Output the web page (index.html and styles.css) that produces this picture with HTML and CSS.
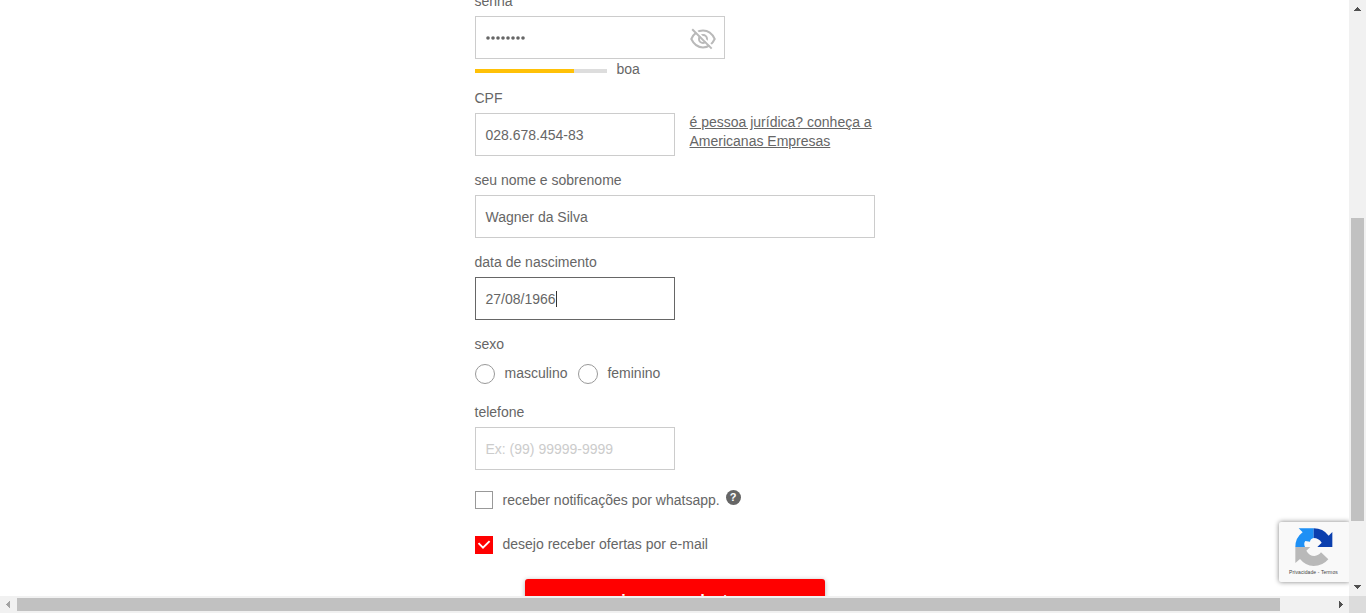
FILE: index.html
```html
<!DOCTYPE html>
<html lang="pt-BR">
<head>
<meta charset="utf-8">
<title>Cadastro</title>
<link rel="stylesheet" href="styles.css">
</head>
<body>
<div class="window">
  <main class="page">
    <form class="form">
      <div class="field password">
        <label class="label">senha</label>
        <div class="input input-password">
          <svg class="dots" width="40" height="4" viewBox="0 0 40 4" fill="#666">
            <circle cx="2" cy="2" r="1.800"/><circle cx="7" cy="2" r="1.800"/><circle cx="12" cy="2" r="1.800"/><circle cx="17" cy="2" r="1.800"/><circle cx="22" cy="2" r="1.800"/><circle cx="27" cy="2" r="1.800"/><circle cx="32" cy="2" r="1.800"/><circle cx="37" cy="2" r="1.800"/>
          </svg>
          <svg class="eye" width="26" height="22" viewBox="0 0 26 22" fill="none" stroke="#b9b9b9" stroke-width="2">
            <path d="M1.3 11C4 5.300 8.200 2.600 13 2.600S22 5.300 24.700 11C22 16.700 17.800 19.400 13 19.400S4 16.700 1.300 11Z"/>
            <circle cx="13" cy="11" r="4"/>
            <path d="M3.600 0.500L23 19.300" stroke="#fff" stroke-width="2"/>
            <path d="M2.200 1.200L21.700 20.600"/>
          </svg>
        </div>
        <div class="strength"><span class="meter"><span class="meter-fill"></span></span><span>boa</span></div>
      </div>
      <div class="field">
        <label class="label">CPF</label>
        <div class="row">
          <div class="input">028.678.454-83</div>
          <a class="company">é pessoa jurídica? conheça a<br>Americanas Empresas</a>
        </div>
      </div>
      <div class="field">
        <label class="label">seu nome e sobrenome</label>
        <div class="input input-wide">Wagner da Silva</div>
      </div>
      <div class="field">
        <label class="label">data de nascimento</label>
        <div class="input input-focus">27/08/1966<span class="caret"></span></div>
      </div>
      <div class="field field-gender">
        <label class="label">sexo</label>
        <div class="radios">
          <span class="radio"></span><span class="radio-label">masculino</span>
          <span class="radio"></span><span class="radio-label">feminino</span>
        </div>
      </div>
      <div class="field field-phone">
        <label class="label">telefone</label>
        <div class="input placeholder">Ex: (99) 99999-9999</div>
      </div>
      <div class="option option-whatsapp">
        <span class="checkbox"></span><span>receber notificações por whatsapp.</span><span class="help">?</span>
      </div>
      <div class="option">
        <span class="checkbox checked"><svg width="18" height="18" viewBox="0 0 18 18" fill="none" stroke="#fff" stroke-width="1.9"><path d="M3.500 7.200L8 11.700L14.600 5.100"/></svg></span><span>desejo receber ofertas por e-mail</span>
      </div>
      <div class="submit">criar seu cadastro</div>
    </form>
    <aside class="captcha">
      <svg class="captcha-logo" width="38" height="38" viewBox="88 54 114 114">
        <path fill="#1e90f5" d="M99 55H144V84Q134 86 133 95L119 93Q113 101 118 111H89Q89 83 111 67Z"/>
        <path fill="#0b3fae" d="M144 55Q172 55 189 77L200 66V111H155L168 98Q159 84 144 84Z"/>
        <path fill="#b9b9b9" d="M89 111H134L122 122Q131 138 146 138Q159 137 166 127L188 148Q171 168 144 168Q119 167 103 147L89 159Z"/>
      </svg>
      <span class="captcha-text">Privacidade - Termos</span>
    </aside>
  </main>
  <div class="vbar">
    <svg class="up" width="17" height="17"><path d="M5 11V10H6V9H7V8H8V7H9V8H10V9H11V10H12V11Z" class="arrow-shape"/></svg>
    <div class="vthumb"></div>
    <svg class="down" width="17" height="17"><path d="M5 6H12V7H11V8H10V9H9V10H8V9H7V8H6V7H5Z" class="arrow-shape"/></svg>
  </div>
  <div class="hbar">
    <svg width="17" height="17"><path d="M10 5V12H9V11H8V10H7V9H6V8H7V7H8V6H9V5Z" fill="#a3a3a3"/></svg>
    <div class="hthumb"></div>
    <svg class="right" width="17" height="17"><path d="M7 5V12H8V11H9V10H10V9H11V8H10V7H9V6H8V5Z" class="arrow-shape"/></svg>
  </div>
  <div class="corner"></div>
</div>
</body>
</html>
```

FILE: styles.css
```css
* { box-sizing: border-box; }
body {
  margin: 0;
  overflow: hidden;
  background: #fff;
  color: #666;
  font: 14px/19px "Liberation Sans", Arial, sans-serif;
}
svg { display: block; }
.window {
  display: grid;
  grid-template: 596px 17px / 1349px 17px;
  width: 1366px;
  height: 613px;
}
.page { position: relative; overflow: hidden; }
.form { width: 400px; margin: -8px 0 0 475px; }
.field { height: 82px; }
.password { height: 97px; }
.label { display: block; height: 24px; margin-left: -0.500px; }
.input {
  display: flex;
  align-items: center;
  width: 200px;
  height: 43px;
  padding: 1px 9.500px 0;
  border: 1px solid #ccc;
}
.input-password { width: 250px; padding: 2px 8px 0 10px; justify-content: space-between; }
.input-wide { width: 400px; }
.input-focus { border-color: #666; }
.placeholder { color: #ccc; }
.dots { flex: none; margin-top: -1px; }
.eye { flex: none; }
.strength { display: flex; align-items: center; gap: 9.500px; height: 20px; padding-top: 1px; }
.meter { width: 132px; height: 4px; margin-top: 2px; background: #ddd; }
.meter-fill { display: block; width: 99px; height: 4px; background: #ffc107; }
.row { display: flex; gap: 14.500px; }
.company { text-decoration: underline; white-space: nowrap; }
.caret { width: 1px; height: 16px; background: #333; }
.field-gender { height: 68px; }
.field-gender .label { height: 19px; }
.radios { display: flex; align-items: center; height: 39px; }
.radio { width: 20px; height: 20px; border: 1px solid #999; border-radius: 50%; }
.radio-label { margin: 0 10.400px 0 9.500px; }
.field-phone { height: 81px; }
.option { display: flex; align-items: center; gap: 9.500px; height: 45px; }
.option > span:nth-child(2) { margin-top: -1px; }
.option-whatsapp { margin-top: -7px; }
.option-whatsapp > span:nth-child(2) { margin-top: 1px; }
.checkbox { width: 18px; height: 18px; border: 1px solid #999; }
.checked { border: 0; background: #f00; }
.help {
  width: 15px;
  height: 15px;
  margin: -5px 0 0 -3.500px;
  border-radius: 50%;
  background: #666;
  color: #fff;
  font-size: 11px;
  font-weight: bold;
  line-height: 15px;
  text-align: center;
}
.submit {
  width: 300px;
  height: 42px;
  margin: 12px 0 0 50px;
  border-radius: 3px;
  background: #f00;
  box-shadow: 0 1px 5px rgba(0, 0, 0, .3);
  color: #fff;
  font-size: 16px;
  font-weight: bold;
  line-height: 44px;
  text-align: center;
}
.captcha {
  position: absolute;
  right: -1px;
  bottom: 14px;
  display: flex;
  flex-direction: column;
  align-items: flex-start;
  width: 71px;
  height: 60px;
  padding: 6px 0 0 16px;
  border-radius: 2px;
  background: #f9f9f9;
  box-shadow: 0 0 5px #808080;
}
.captcha-text { margin: 3px 0 0 -6px; color: #444; font: 5px/7px "Liberation Sans", Arial, sans-serif; letter-spacing: .1px; white-space: nowrap; }
.vbar { display: flex; flex-direction: column; background: #f1f1f1; }
.vthumb { width: 13px; height: 303px; margin: 201px 0 0 2px; background: #c1c1c1; }
.down { margin-top: auto; }
.arrow-shape { fill: #505050; }
.hbar { display: flex; background: #f1f1f1; }
.hthumb { width: 1263px; height: 13px; margin-top: 2px; background: #c1c1c1; }
.right { margin-left: auto; }
.corner { background: #dcdcdc; }
```
